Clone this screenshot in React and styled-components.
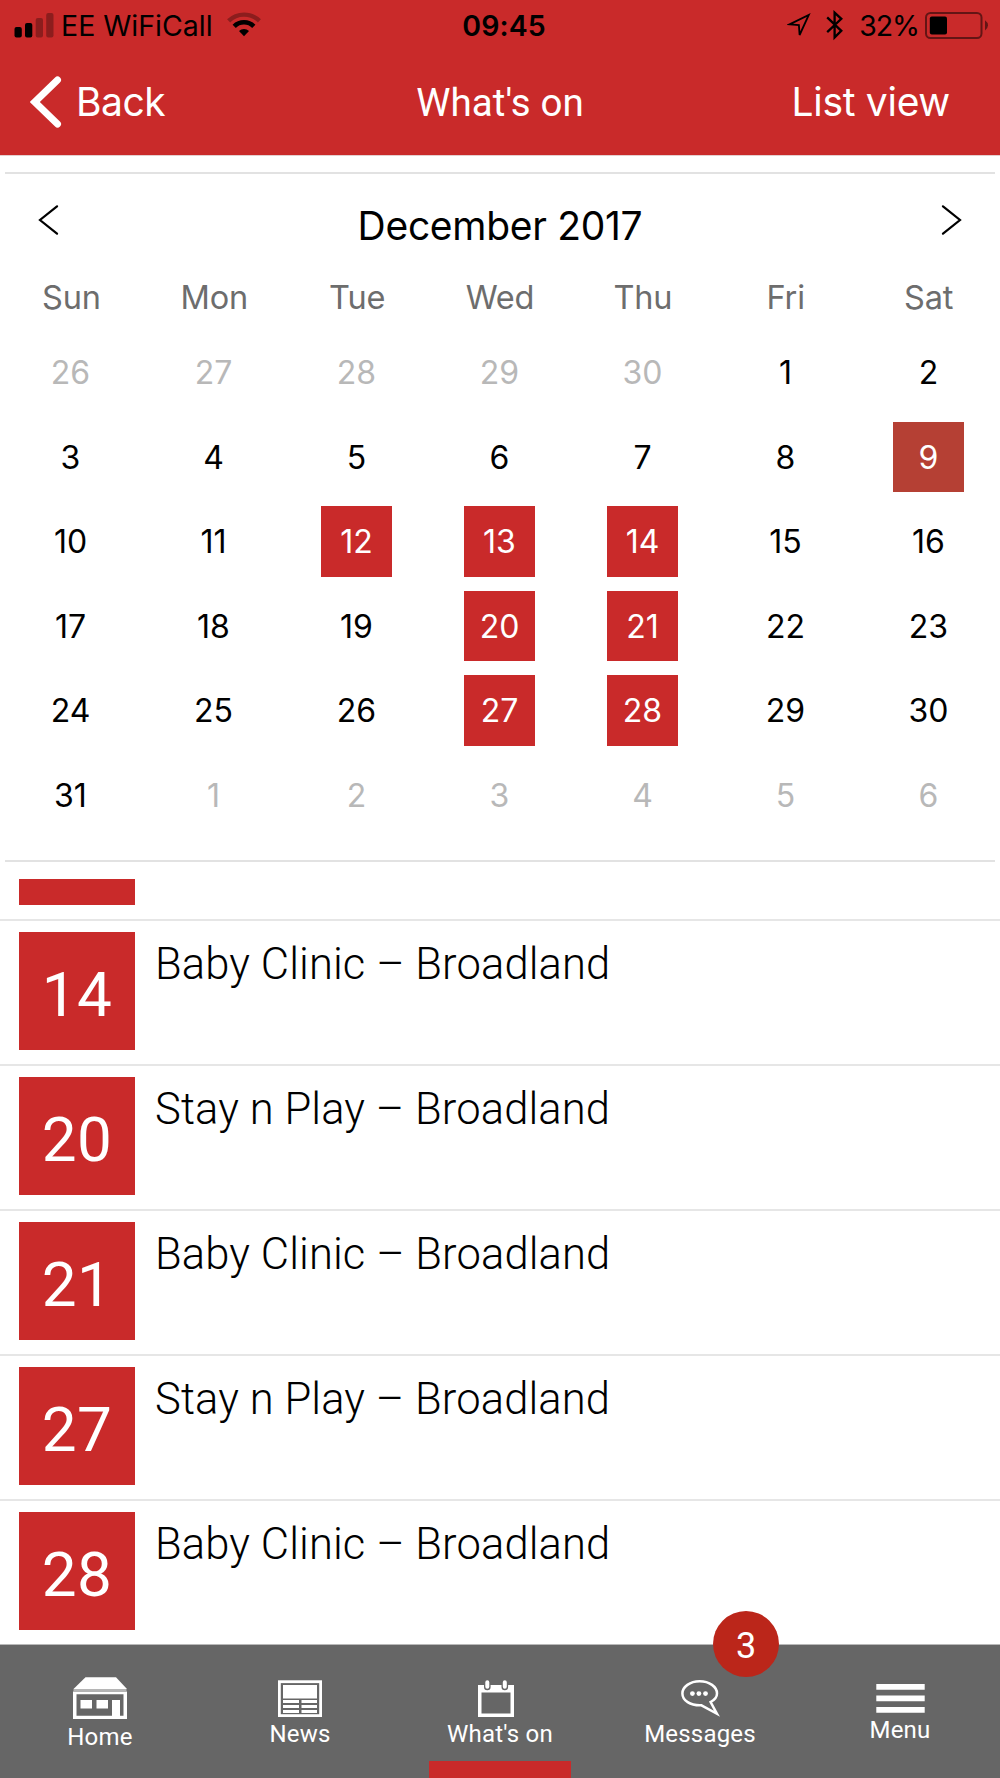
import React, { useState } from "react";
import styled, { createGlobalStyle } from "styled-components";

const GlobalStyle = createGlobalStyle`
  body {
    margin: 0;
    background: #ffffff;
  }
  * {
    box-sizing: border-box;
  }
`;

const Screen = styled.div`
  width: 1000px;
  height: 1778px;
  display: flex;
  flex-direction: column;
  overflow: hidden;
  background: #ffffff;
  color: #000000;
  font-family: Inter, "Liberation Sans", sans-serif;
`;

const Header = styled.header`
  height: 156px;
  border-bottom: 1px solid #e4cfcf;
  background: #c92a2a;
`;

const StatusBar = styled.div`
  height: 51px;
  display: grid;
  grid-template-columns: 1fr auto 1fr;
  align-items: center;
  padding: 0 12px 0 14px;
  font-size: 28.5px;
  line-height: 40px;
`;

const StatusGroup = styled.div`
  display: flex;
  align-items: center;
  justify-content: ${props => (props.$end ? "flex-end" : "flex-start")};
`;

const Carrier = styled.span`
  margin-left: 7px;
  margin-right: 14px;
`;

const Clock = styled.span`
  padding-left: 6px;
  font-weight: 600;
  letter-spacing: 0.1px;
`;

const Percent = styled.span`
  margin-left: 16px;
  margin-right: 6px;
  letter-spacing: -1.1px;
`;

const LocationSvg = styled.svg`
  margin-right: 15px;
`;

const NavBar = styled.div`
  height: 102px;
  display: grid;
  grid-template-columns: 1fr auto 1fr;
  align-items: center;
  padding: 0 30px;
  color: #ffffff;
`;

const BackButton = styled.button`
  display: flex;
  align-items: center;
  gap: 14px;
  padding: 0;
  border: 0;
  background: none;
  color: inherit;
  font: inherit;
  font-size: 39px;
  letter-spacing: -0.5px;
`;

const ButtonText = styled.span`
  padding-bottom: 2px;
`;

const NavTitle = styled.h1`
  margin: 0;
  font-family: Roboto, sans-serif;
  font-size: 38.5px;
  font-weight: 400;
  letter-spacing: 0.1px;
`;

const ListViewButton = styled(BackButton)`
  justify-self: end;
  margin-right: 20px;
  letter-spacing: -0.3px;
`;

const Divider = styled.div`
  height: 2px;
  margin: ${props => props.$gap}px 5px 0;
  background: #e2e2e2;
`;

const MonthBar = styled.div`
  height: 104px;
  display: flex;
  align-items: center;
  justify-content: space-between;
  padding: 0 38px 1px;
`;

const Month = styled.h2`
  margin: 0;
  font-size: 39px;
  font-weight: 400;
  letter-spacing: -0.3px;
`;

const ArrowSvg = styled.svg`
  margin-bottom: 12px;
`;

const Weekdays = styled.div`
  height: 36px;
  margin-bottom: 16px;
  padding-bottom: 1px;
  display: grid;
  grid-template-columns: repeat(7, 1fr);
  align-items: center;
  text-align: center;
  color: #6d6d6d;
  font-size: 32.5px;
  letter-spacing: -0.2px;
`;

const Days = styled.div`
  height: 507.6px;
  margin: 0 0 0 -1px;
  display: grid;
  grid-template-columns: repeat(7, 1fr);
  grid-template-rows: repeat(6, 84.6px);
  align-items: center;
  justify-items: center;
`;

const dayColors = {
  today: "#b54034",
  event: "#c92a2a"
};

const Day = styled.div`
  width: 70.4px;
  height: 70.4px;
  line-height: 72px;
  text-align: center;
  font-size: 32px;
  background: ${props => dayColors[props.$kind] || "transparent"};
  color: ${props =>
    props.$kind === "other"
      ? "#b8b8b8"
      : dayColors[props.$kind]
      ? "#ffffff"
      : "#000000"};
`;

const EventList = styled.div`
  height: 765px;
  margin-top: 17px;
  overflow: hidden;
`;

const EventRow = styled.div`
  height: 145px;
  display: flex;
  padding: 11px 19px 0;
  border-top: 2px solid #e6e6e6;
`;

// row that is scrolled half way under the calendar
const CutRow = styled.div`
  height: 40px;
  padding: 0 19px;
`;

const DateBox = styled.div`
  width: 116px;
  height: ${props => props.$height || 118}px;
  line-height: 126px;
  background: #c92a2a;
  color: #ffffff;
  text-align: center;
  font-family: Roboto, sans-serif;
  font-size: 62px;
  letter-spacing: 0.5px;
`;

const EventTitle = styled.div`
  margin-left: 20px;
  line-height: 65px;
  font-family: Roboto, sans-serif;
  font-size: 43.5px;
  font-weight: 300;
  letter-spacing: 0.12px;
`;

const TabBar = styled.nav`
  height: 134px;
  display: grid;
  grid-template-columns: repeat(5, 1fr);
  border-top: 1px solid #b9b9b9;
  background: #666666;
`;

const Tab = styled.div`
  position: relative;
  display: flex;
  flex-direction: column;
  align-items: center;
  padding-top: ${props => props.$top}px;
  color: #ffffff;
  font-family: Roboto, sans-serif;
  font-size: 24px;
  letter-spacing: 0.2px;
  line-height: 28px;
`;

const TabIcon = styled.div`
  display: flex;
  margin-right: ${props => props.$shift || 0}px;
  margin-bottom: ${props => props.$gap || 3}px;
`;

const ActiveMark = styled.div`
  width: 142px;
  height: 17px;
  margin-top: auto;
  background: #c92a2a;
`;

const Badge = styled.div`
  position: absolute;
  top: -34px;
  left: 113px;
  width: 66px;
  height: 66px;
  line-height: 70px;
  border-radius: 50%;
  background: #bb261a;
  text-align: center;
  font-size: 36px;
  letter-spacing: 0;
`;

const SignalIcon = () => (
  <svg width="40" height="26" viewBox="0 0 40 26">
    <rect x="0.5" y="14" width="7.3" height="10.5" rx="2" />
    <rect x="11" y="10" width="7.3" height="14.5" rx="2" />
    <rect x="21.7" y="5" width="7.3" height="19.5" rx="2" opacity="0.3" />
    <rect x="32.2" y="0" width="7.3" height="24.5" rx="2" opacity="0.3" />
  </svg>
);

const WifiIcon = () => (
  <svg width="34" height="27" viewBox="0 0 34 27">
    <path
      d="M1.6 8.9A22 22 0 0 1 32.4 8.9"
      fill="none"
      stroke="#000"
      strokeWidth="4.4"
      opacity="0.3"
    />
    <path
      d="M7.2 14.3A14 14 0 0 1 26.8 14.3"
      fill="none"
      stroke="#000"
      strokeWidth="4.6"
    />
    <path d="M12 19A7.2 7.2 0 0 1 22 19L17 24.3Z" />
  </svg>
);

const LocationIcon = () => (
  <LocationSvg width="24" height="26" viewBox="0 0 24 26">
    <path
      d="M2.5 11.4L21.8 2L12.6 22L11.9 12.1Z"
      fill="none"
      stroke="#000"
      strokeWidth="1.8"
    />
  </LocationSvg>
);

const BluetoothIcon = () => (
  <svg width="17" height="31" viewBox="0 0 17 31">
    <path
      d="M1.2 7.3L15.3 20.8L8.6 27.4V2.6L15.3 8.8L1.2 22.2"
      fill="none"
      stroke="#000"
      strokeWidth="2.3"
    />
  </svg>
);

const BatteryIcon = () => (
  <svg width="63" height="28" viewBox="0 0 63 28">
    <rect
      x="1"
      y="1"
      width="55.5"
      height="25"
      rx="4.5"
      fill="none"
      stroke="#000"
      strokeWidth="2"
      opacity="0.5"
    />
    <rect x="4.8" y="4.4" width="17.2" height="18" rx="2" />
    <path d="M60 8.3Q63 10.5 63 13.3T60 18.5Z" opacity="0.5" />
  </svg>
);

const Arrow = ({ right }) => (
  <ArrowSvg width="21" height="30" viewBox="0 0 21 30">
    <path
      d={right ? "M2 1.3L19 15L2 28.7" : "M19 1.3L2 15L19 28.7"}
      fill="none"
      stroke="#000"
      strokeWidth="2.2"
      strokeLinecap="round"
    />
  </ArrowSvg>
);

const HomeIcon = () => (
  <svg width="54" height="42" viewBox="0 0 54 42">
    <path d="M12.5 0.3H43L54 12H0.5Z" fill="#fff" />
    <path d="M0.5 13H53.5" stroke="#b5b5b5" strokeWidth="2" />
    <path
      d="M0 14.5H54V42H0ZM3.5 17.3V38.7H39V23H47V38.7H50.5V17.3Z"
      fill="#fff"
      fillRule="evenodd"
    />
    <path d="M7.5 23H19V31.5H7.5ZM23.5 23H35V31.5H23.5Z" fill="#fff" />
  </svg>
);

const NewsIcon = () => (
  <svg width="44" height="37" viewBox="0 0 44 37">
    <rect
      x="1.4"
      y="1.7"
      width="41.2"
      height="33.9"
      fill="none"
      stroke="#fff"
      strokeWidth="2.8"
    />
    <path
      d="M5 5H39V18.4H5ZM5 20H21V23H5ZM23.5 20H39V23H23.5ZM5 25H21V28H5ZM23.5 25H39V28H23.5ZM5 30H21V33H5ZM23.5 30H39V33H23.5Z"
      fill="#fff"
    />
  </svg>
);

const CalendarIcon = () => (
  <svg width="36" height="37" viewBox="0 0 36 37">
    <path
      d="M0 5H36V37H0ZM3.5 12.5V33.5H32.5V12.5Z"
      fill="#fff"
      fillRule="evenodd"
    />
    <path
      d="M9.3 2.7V7M26.8 2.7V7"
      stroke="#666"
      strokeWidth="6.6"
      strokeLinecap="round"
    />
    <path
      d="M9.3 2.2V6.8M26.8 2.2V6.8"
      stroke="#fff"
      strokeWidth="4"
      strokeLinecap="round"
    />
  </svg>
);

const MessagesIcon = () => (
  <svg width="39" height="37" viewBox="0 0 39 37">
    <path
      d="M20.5 25.3L36 33.8L29.6 22C34 19.6 36 17 36 13.4C36 6.8 28.5 1.3 18.6 1.3C9 1.3 1.4 6.8 1.4 13.4C1.4 20.2 9 25.8 20.5 25.3Z"
      fill="none"
      stroke="#fff"
      strokeWidth="2.5"
    />
    <circle cx="11.4" cy="13.6" r="2.4" fill="#fff" />
    <circle cx="17.9" cy="13.6" r="2.4" fill="#fff" />
    <circle cx="24.5" cy="13.6" r="2.4" fill="#fff" />
  </svg>
);

const MenuIcon = () => (
  <svg width="49" height="29" viewBox="0 0 49 29">
    <path
      d="M0.3 0H48.7V5.8H0.3ZM0.3 11.5H48.7V17.3H0.3ZM0.3 23H48.7V28.8H0.3Z"
      fill="#fff"
    />
  </svg>
);

const weekdays = ["Sun", "Mon", "Tue", "Wed", "Thu", "Fri", "Sat"];

const eventDays = [12, 13, 14, 20, 21, 27, 28];
const today = 9;

const days = [
  ...[26, 27, 28, 29, 30].map(day => ({ day, kind: "other" })),
  ...Array.from({ length: 31 }, (_, i) => {
    const day = i + 1;
    if (day === today) return { day, kind: "today" };
    return { day, kind: eventDays.includes(day) ? "event" : "normal" };
  }),
  ...[1, 2, 3, 4, 5, 6].map(day => ({ day, kind: "other" }))
];

const events = [
  { day: 14, title: "Baby Clinic – Broadland" },
  { day: 20, title: "Stay n Play – Broadland" },
  { day: 21, title: "Baby Clinic – Broadland" },
  { day: 27, title: "Stay n Play – Broadland" },
  { day: 28, title: "Baby Clinic – Broadland" }
];

const tabs = [
  { name: "Home", icon: <HomeIcon />, top: 32, gap: 4 },
  { name: "News", icon: <NewsIcon />, top: 35 },
  { name: "What's on", icon: <CalendarIcon />, top: 35, shift: 9 },
  { name: "Messages", icon: <MessagesIcon />, top: 35, badge: 3 },
  { name: "Menu", icon: <MenuIcon />, top: 39 }
];

const App = () => {
  const [activeTab, setActiveTab] = useState("What's on");

  return (
    <Screen>
      <GlobalStyle />
      <Header>
        <StatusBar>
          <StatusGroup>
            <SignalIcon />
            <Carrier>EE WiFiCall</Carrier>
            <WifiIcon />
          </StatusGroup>
          <Clock>09:45</Clock>
          <StatusGroup $end>
            <LocationIcon />
            <BluetoothIcon />
            <Percent>32%</Percent>
            <BatteryIcon />
          </StatusGroup>
        </StatusBar>
        <NavBar>
          <BackButton>
            <svg width="32" height="52" viewBox="0 0 32 52">
              <path
                d="M27.5 4L4.8 26L27.5 48"
                fill="none"
                stroke="#fff"
                strokeWidth="7"
                strokeLinecap="round"
              />
            </svg>
            <ButtonText>Back</ButtonText>
          </BackButton>
          <NavTitle>What's on</NavTitle>
          <ListViewButton>
            <ButtonText>List view</ButtonText>
          </ListViewButton>
        </NavBar>
      </Header>
      <Divider $gap={16} />
      <MonthBar>
        <Arrow />
        <Month>December 2017</Month>
        <Arrow right />
      </MonthBar>
      <Weekdays>
        {weekdays.map(name => (
          <span key={name}>{name}</span>
        ))}
      </Weekdays>
      <Days>
        {days.map((item, i) => (
          <Day key={i} $kind={item.kind}>
            {item.day}
          </Day>
        ))}
      </Days>
      <Divider $gap={22.4} />
      <EventList>
        <CutRow>
          <DateBox $height={26} />
        </CutRow>
        {events.map(event => (
          <EventRow key={event.day}>
            <DateBox>{event.day}</DateBox>
            <EventTitle>{event.title}</EventTitle>
          </EventRow>
        ))}
      </EventList>
      <TabBar>
        {tabs.map(tab => (
          <Tab
            key={tab.name}
            $top={tab.top}
            onClick={() => setActiveTab(tab.name)}
          >
            <TabIcon $shift={tab.shift} $gap={tab.gap}>
              {tab.icon}
            </TabIcon>
            {tab.name}
            {tab.badge && <Badge>{tab.badge}</Badge>}
            {activeTab === tab.name && <ActiveMark />}
          </Tab>
        ))}
      </TabBar>
    </Screen>
  );
};

export default App;
